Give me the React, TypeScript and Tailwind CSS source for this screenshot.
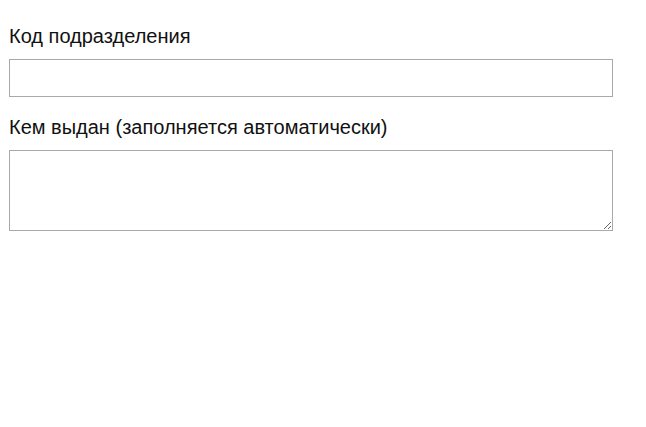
export default function App() {
  return (
    <div className="min-h-[427px] bg-white px-[9px] pt-[25px]" style={{ fontFamily: '"Liberation Sans", Arial, sans-serif' }}>
      <label className="block text-[20px] leading-[23px] text-[#111]">Код подразделения</label>
      <input type="text" className="mt-[11px] block h-[38px] w-[604px] border border-[#a9a9a9] bg-white outline-none" />
      <label className="mt-[19px] block text-[20px] leading-[23px] text-[#111]">Кем выдан (заполняется автоматически)</label>
      <textarea className="mt-[11px] block h-[81px] w-[604px] border border-[#a9a9a9] bg-white outline-none" />
    </div>
  );
}
